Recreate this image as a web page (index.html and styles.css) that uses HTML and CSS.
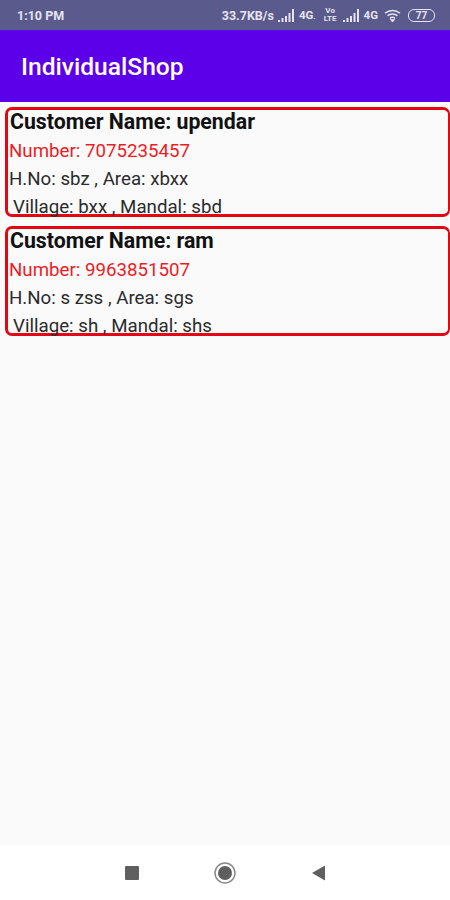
FILE: index.html
```html
<!DOCTYPE html>
<html lang="en">
<head>
    <meta charset="UTF-8">
    <meta name="viewport" content="width=device-width, initial-scale=1.0">
    <title>IndividualShop</title>
    <link rel="stylesheet" href="styles.css">
</head>
<body>
    <!-- Status bar -->
    <div class="status-bar">
        <span class="time">1:10 PM</span>
        <div class="status-icons">
            <span>33.7KB/s</span>
            <svg width="17" height="13" viewBox="0 0 17 13"><path d="M0 11h2v2H0zM3.500 9h2v4h-2zM7 7h2v6H7zM10.500 4h2v9h-2zM14 0h2v13h-2z" fill="#e4e4ee"/></svg>
            <span class="network">4G<small class="data-dot">.</small></span>
            <span class="volte">Vo<br>LTE</span>
            <svg width="17" height="13" viewBox="0 0 17 13"><path d="M0 11h2v2H0zM3.500 9h2v4h-2zM7 7h2v6H7zM10.500 4h2v9h-2zM14 0h2v13h-2z" fill="#e4e4ee"/></svg>
            <span class="network">4G</span>
            <svg class="wifi" width="17" height="13" viewBox="0 0 17 13" fill="none" stroke="#e4e4ee" stroke-width="1.500"><path d="M1 4.200c4.200-3.700 10.800-3.700 15 0"/><path d="M3.500 6.800c2.900-2.500 7.100-2.500 10 0"/><path d="M6 9.400c1.400-1.200 3.600-1.200 5 0"/><path d="M8.500 12.300l-1.200-1.300h2.400z"/></svg>
            <span class="battery">77</span>
        </div>
    </div>

    <!-- App bar -->
    <header class="app-bar">
        <h1>IndividualShop</h1>
    </header>

    <main class="customer-list">
        <div class="customer-card">
            <p class="customer-name">Customer Name: upendar</p>
            <p class="customer-number">Number: 7075235457</p>
            <p>H.No: sbz , Area: xbxx</p>
            <p class="customer-village">Village: bxx , Mandal: sbd</p>
        </div>
        <div class="customer-card">
            <p class="customer-name">Customer Name: ram</p>
            <p class="customer-number">Number: 9963851507</p>
            <p>H.No: s zss , Area: sgs</p>
            <p class="customer-village">Village: sh , Mandal: shs</p>
        </div>
    </main>

    <!-- Navigation bar -->
    <footer class="nav-bar">
        <svg width="14" height="14" viewBox="0 0 14 14"><rect width="14" height="14" rx="1" fill="#5f5f5f"/></svg>
        <svg width="22" height="22" viewBox="0 0 22 22"><circle cx="11" cy="11" r="10" fill="none" stroke="#8a8a8a" stroke-width="1.500"/><circle cx="11" cy="11" r="7" fill="#5f5f5f"/></svg>
        <svg width="14" height="16" viewBox="0 0 14 16"><path d="M1 8L14 0.500v15z" fill="#5f5f5f"/></svg>
    </footer>
</body>
</html>
```

FILE: styles.css
```css
/* Global Styles */
* {
    margin: 0;
    padding: 0;
    box-sizing: border-box;
    font-family: Roboto, "Liberation Sans", sans-serif;
}

body {
    width: 450px;
    height: 900px;
    background-color: #fafafa;
    color: #1a1a1a;
    display: flex;
    flex-direction: column;
    overflow: hidden;
}

/* Status bar */
.status-bar {
    height: 30px;
    flex-shrink: 0;
    display: flex;
    justify-content: space-between;
    align-items: center;
    padding: 0 15px 0 17px;
    background-color: #5b5a8c;
    color: #e4e4ee;
    font-size: 12.500px;
    font-weight: 700;
}

.status-icons {
    display: flex;
    align-items: center;
    gap: 4px;
}

.network {
    font-size: 11.500px;
}

.data-dot {
    font-size: 8px;
}

.volte {
    font-size: 8px;
    line-height: 8px;
    text-align: center;
    margin: 0 2px 0 4px;
}

.wifi {
    margin-left: 2px;
}

.battery {
    width: 27px;
    height: 13px;
    margin-left: 3px;
    border: 1px solid #e4e4ee;
    border-radius: 6px;
    font-size: 10px;
    line-height: 11px;
    text-align: center;
}

/* App bar */
.app-bar {
    height: 72px;
    flex-shrink: 0;
    display: flex;
    align-items: center;
    padding-left: 21px;
    background-color: #5c00ea;
    color: white;
}

.app-bar h1 {
    font-size: 24.600px;
    font-weight: 500;
}

/* Customer cards */
.customer-list {
    flex: 1;
    display: flex;
    flex-direction: column;
    gap: 9px;
    padding: 5px 0 0 5px;
}

.customer-card {
    height: 110px;
    padding: 1px 0 0 1px;
    display: flex;
    flex-direction: column;
    gap: 8px;
    border: 3px solid #e30613;
    border-right-width: 2px;
    border-radius: 7px;
    font-size: 18.700px;
    line-height: 20px;
    color: #2b2b2b;
}

.customer-name {
    padding-left: 1px;
    font-size: 21.300px;
    font-weight: 700;
    line-height: 22px;
    color: #111;
}

.customer-number {
    color: #ee1c25;
}

.customer-village {
    padding-left: 4px;
}

/* Navigation bar */
.nav-bar {
    height: 55px;
    flex-shrink: 0;
    display: flex;
    justify-content: center;
    align-items: center;
    gap: 75px;
    background-color: white;
}
```
